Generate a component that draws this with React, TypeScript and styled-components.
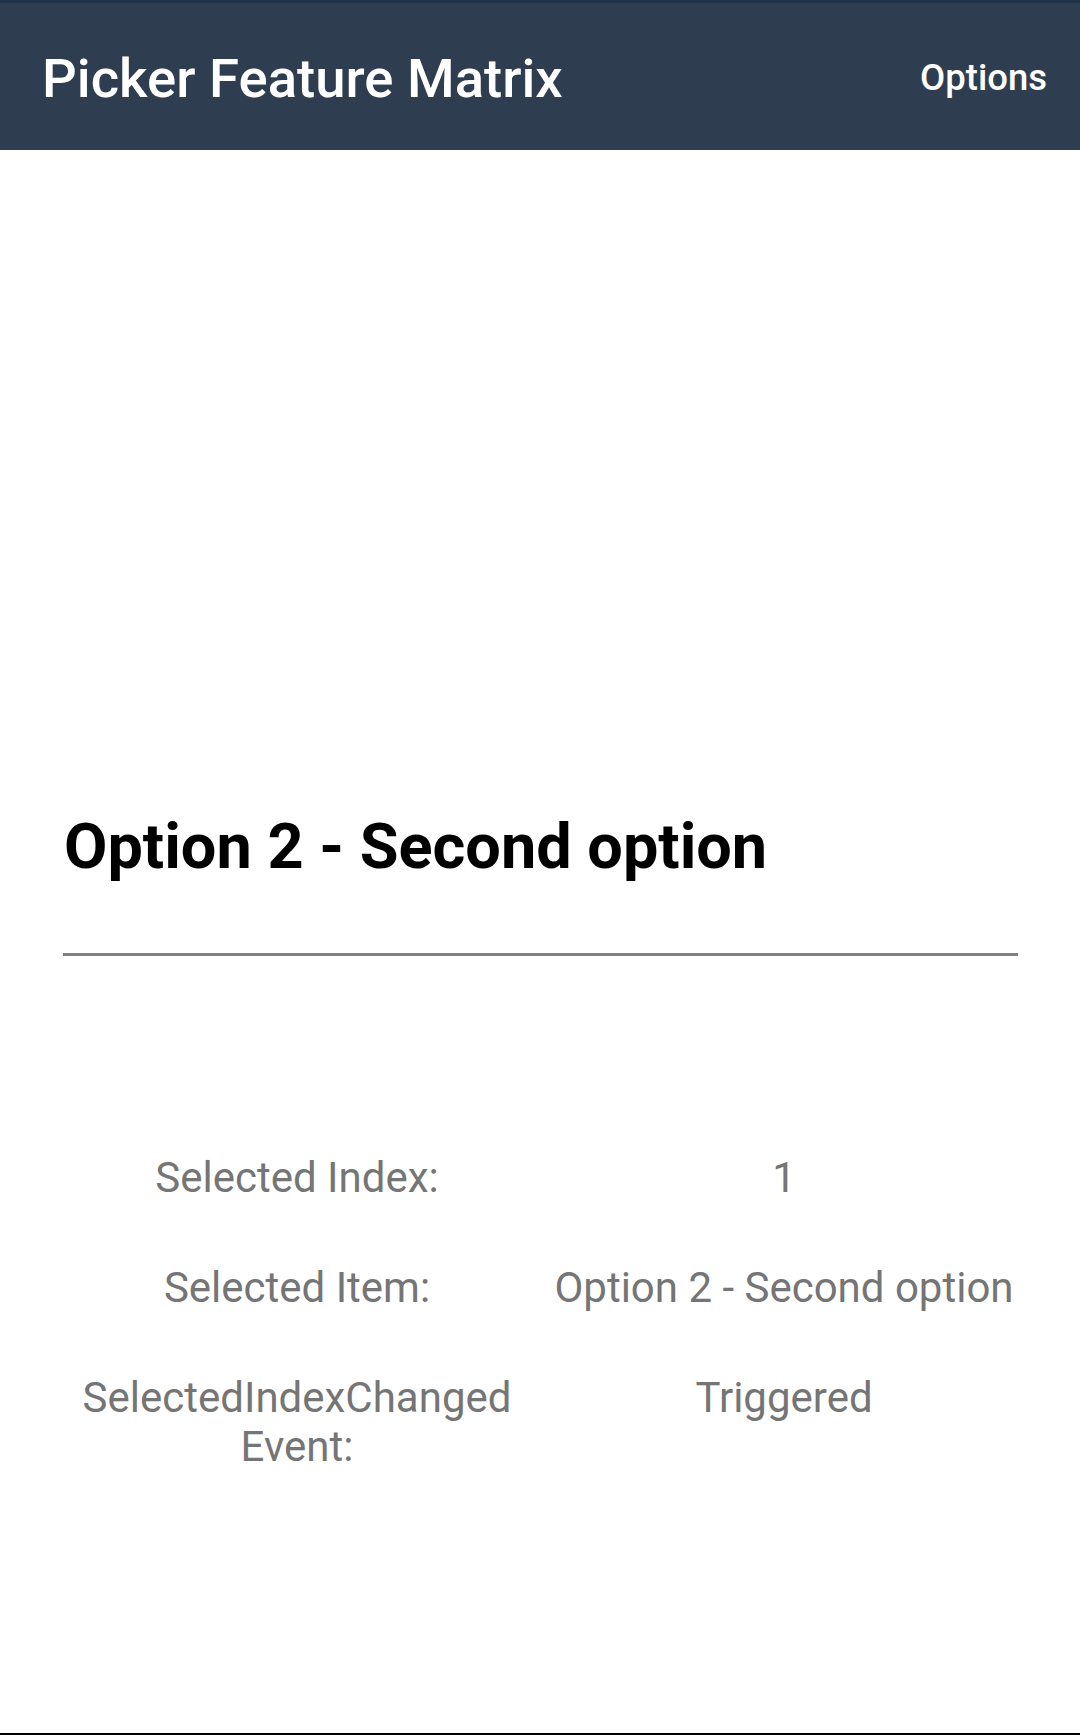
import React from "react";
import styled, { createGlobalStyle } from "styled-components";

const GlobalStyle = createGlobalStyle`
  html, body {
    margin: 0;
    padding: 0;
    background: #ffffff;
  }
  body {
    font-family: Roboto, "Noto Sans", "Liberation Sans", sans-serif;
  }
  * { box-sizing: border-box; }
`;

const Screen = styled.div`
  display: flex;
  flex-direction: column;
  width: 1080px;
  height: 1735px;
  background: #ffffff;
  border-bottom: 2px solid #000000;
`;

const Toolbar = styled.header`
  display: flex;
  align-items: center;
  justify-content: space-between;
  height: 150px;
  padding: 4px 33px 0 42px;
  background: #2e3e50;
  border-top: 3px solid #1d3249;
  color: #ffffff;
`;

const Title = styled.h1`
  margin: 0;
  font-family: Roboto, sans-serif;
  font-weight: 500;
  font-size: 54.5px;
  line-height: 1;
  letter-spacing: 0;
`;

const ToolbarAction = styled.span`
  font-family: Roboto, sans-serif;
  font-weight: 500;
  font-size: 36.5px;
  line-height: 1;
`;

const Content = styled.main`
  display: flex;
  flex-direction: column;
  padding: 0 62px 0 63px;
`;

const SelectedTitle = styled.h2`
  margin: 665px 0 0 1px;
  font-family: Roboto, sans-serif;
  font-weight: 700;
  font-size: 63px;
  line-height: 1;
  color: #000000;
`;

const Divider = styled.hr`
  margin: 75px 0 0;
  border: none;
  height: 3px;
  background: #808080;
`;

const InfoGrid = styled.div`
  display: grid;
  grid-template-columns: 1fr 1fr;
  column-gap: 19px;
  row-gap: 61px;
  margin-top: 197px;
`;

const Cell = styled.div`
  font-family: Roboto, sans-serif;
  font-weight: 400;
  font-size: 42px;
  line-height: normal;
  color: #757575;
  text-align: center;
`;

const rows: [string, string][] = [
  ["Selected Index:", "1"],
  ["Selected Item:", "Option 2 - Second option"],
  ["SelectedIndexChanged Event:", "Triggered"],
];

export default function App() {
  return (
    <>
      <GlobalStyle />
      <Screen>
        <Toolbar>
          <Title>Picker Feature Matrix</Title>
          <ToolbarAction>Options</ToolbarAction>
        </Toolbar>
        <Content>
          <SelectedTitle>Option 2 - Second option</SelectedTitle>
          <Divider />
          <InfoGrid>
            {rows.map(([label, value]) => (
              <React.Fragment key={label}>
                <Cell>{label}</Cell>
                <Cell>{value}</Cell>
              </React.Fragment>
            ))}
          </InfoGrid>
        </Content>
      </Screen>
    </>
  );
}
